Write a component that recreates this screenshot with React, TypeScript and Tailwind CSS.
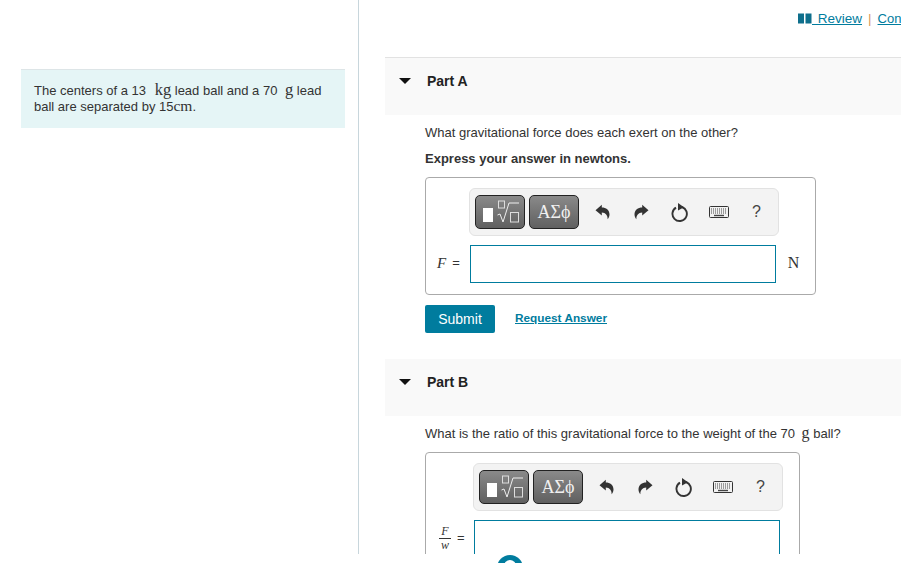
import React from "react";

const serif = "font-['Liberation_Serif',serif]";

function UndoIcon({ flip }: { flip?: boolean }) {
  return (
    <svg width="15" height="16" viewBox="0 0 15 16" className={flip ? "-scale-x-100" : ""}>
      <path d="M0.5 6.2 L6.8 0.8 V3.6 C11 3.6 14.5 6 14.5 10.6 C14.5 12.4 13.8 14 12.6 15.2 C12.8 11.6 10.6 8.6 6.8 8.6 V11.6 Z" fill="#333" />
    </svg>
  );
}

function RotateIcon() {
  return (
    <svg width="18" height="20" viewBox="0 0 18 20">
      <path d="M5 5.6 A7.2 7.2 0 1 0 11 5" fill="none" stroke="#333" strokeWidth="1.9" />
      <path d="M7 1 L13 5.2 L7 8.4 Z" fill="#333" />
    </svg>
  );
}

function KeyboardIcon() {
  return (
    <svg width="20" height="12" viewBox="0 0 20 12">
      <rect x="0.5" y="0.5" width="19" height="11" rx="1" fill="#f2f2f2" stroke="#333" />
      <path d="M2 3 H18 M2 5 H18 M2 7 H18" stroke="#444" strokeWidth="1" strokeDasharray="1 1" />
      <path d="M5 9.5 H15" stroke="#444" strokeWidth="1.4" />
    </svg>
  );
}

function TemplateIcon() {
  return (
    <svg width="38" height="28" viewBox="0 0 38 28">
      <rect x="2" y="10" width="10" height="14" fill="#fff" />
      <rect x="17.5" y="3" width="6" height="7" fill="none" stroke="#ddd" />
      <path d="M16.5 17 L19 16 L22 24 L28 5 H38" fill="none" stroke="#eee" strokeWidth="1" />
      <rect x="29.5" y="14.5" width="8" height="9.5" fill="none" stroke="#ddd" />
    </svg>
  );
}

function Toolbar({ className }: { className: string }) {
  return (
    <div className={`flex h-[48px] w-[310px] items-center rounded-[6px] border border-[#e2e2e2] bg-[#f3f3f3] pl-[5px] ${className}`}>
      <div className="flex h-[34px] w-[50px] items-center justify-center rounded-[5px] border border-[#222] bg-gradient-to-b from-[#8a8a8a] to-[#606060]">
        <TemplateIcon />
      </div>
      <div className={`ml-[4px] flex h-[34px] w-[50px] items-center justify-center rounded-[5px] border border-[#222] bg-gradient-to-b from-[#8a8a8a] to-[#606060] text-[18px] text-[#f0f0f0] ${serif}`}>
        ΑΣϕ
      </div>
      <div className="ml-[16px] flex w-[15px] justify-center"><UndoIcon /></div>
      <div className="ml-[24px] flex w-[15px] justify-center"><UndoIcon flip /></div>
      <div className="ml-[22px] flex w-[18px] justify-center"><RotateIcon /></div>
      <div className="ml-[20px] flex w-[20px] justify-center"><KeyboardIcon /></div>
      <div className="ml-[23px] text-[16px] text-[#444]">?</div>
    </div>
  );
}

function PartHeader({ label, className }: { label: string; className: string }) {
  return (
    <div className={`flex items-start bg-[#f9f9f9] pl-[14px] pt-[14px] ${className}`}>
      <div className="mt-[6px] h-0 w-0 border-x-[6px] border-t-[6px] border-x-transparent border-t-[#111]" />
      <span className="ml-[16px] text-[14px] font-bold leading-[18px] text-[#222]">{label}</span>
    </div>
  );
}

export default function App() {
  return (
    <div className="relative h-[563px] w-[901px] overflow-hidden bg-white font-['Liberation_Sans',Arial,sans-serif] text-[13px] text-[#333]">
      <div className="flex h-[554px] overflow-hidden">
        {/* Left intro column */}
        <div className="w-[359px] shrink-0 border-r border-[#c8d6dc] pl-[21px] pt-[69px]">
          <div className="h-[59px] w-[324px] border-t border-[#dde5e7] bg-[#e5f5f6] px-[13px] pt-[12px]">
            <div className="h-[16px] leading-[16px]">
              The centers of a 13 <span className={`ml-[5px] text-[16.5px] leading-[16px] ${serif}`}>kg</span> lead ball and a 70 <span className={`ml-[4px] text-[16.5px] leading-[16px] ${serif}`}>g</span> lead
            </div>
            <div className="h-[16px] leading-[15px]">
              ball are separated by 15<span className={`text-[15.5px] leading-[15px] ${serif}`}>cm</span>.
            </div>
          </div>
        </div>

        {/* Parts column */}
        <div className="min-w-0 flex-1 overflow-hidden">
          <div className="flex h-[57px] items-start whitespace-nowrap pl-[439px] pt-[10px] text-[13.5px] leading-[17px]">
            <svg width="14" height="11" viewBox="0 0 14 11" className="mt-[3px] shrink-0">
              <path d="M0 0.5 H6 V10.5 H0 Z M7.5 0.5 H13.5 V10.5 H7.5 Z" fill="#0e6f8c" />
            </svg>
            <a className="text-[#007c9e] underline [word-spacing:2px]">&nbsp;Review</a>
            <span className="ml-[6px] mr-[6px] text-[#d9995b]">|</span>
            <a className="text-[13px] text-[#007c9e] underline">Con</a>
          </div>

          <div className="pl-[26px]">
            <PartHeader label="Part A" className="h-[58px] border-t border-[#e2e2e2]" />
            <div className="pl-[40px]">
              <p className="mt-[9px] leading-[17px]">What gravitational force does each exert on the other?</p>
              <p className="mt-[9px] font-bold leading-[17px]">Express your answer in newtons.</p>
              <div className="mt-[10px] h-[118px] w-[391px] rounded-[4px] border border-[#aaa] pt-[10px]">
                <Toolbar className="ml-[43px]" />
                <div className="mt-[9px] flex items-center">
                  <span className={`ml-[11px] -translate-y-px text-[15px] italic ${serif}`}>F</span>
                  <span className="ml-[6px] -translate-y-px text-[13px]">=</span>
                  <div className="ml-[10px] h-[38px] w-[306px] border border-[#007c9e]" />
                  <span className={`ml-[12px] -translate-y-px text-[16px] ${serif}`}>N</span>
                </div>
              </div>
              <div className="mt-[10px] flex items-center">
                <button className="h-[28px] w-[70px] rounded-[2px] bg-[#007c9e] text-[14px] text-white">Submit</button>
                <a className="ml-[20px] text-[11.8px] font-bold text-[#007c9e] underline">Request Answer</a>
              </div>
            </div>

            <PartHeader label="Part B" className="mt-[26px] h-[57px]" />
            <div className="pl-[40px]">
              <p className="mt-[9px] leading-[17px]">
                What is the ratio of this gravitational force to the weight of the 70 <span className={`ml-[3px] text-[16px] leading-[16px] ${serif}`}>g</span> ball?
              </p>
              <div className="mt-[10px] h-[140px] w-[375px] rounded-[4px] border border-[#aaa] pt-[10px]">
                <Toolbar className="ml-[47px]" />
                <div className="mt-[9px] flex items-start">
                  <div className={`ml-[13px] mt-[5px] flex w-[12px] flex-col items-center text-[12px] italic leading-[13px] ${serif}`}>
                    <span className="w-full border-b border-[#333] text-center">F</span>
                    <span>w</span>
                  </div>
                  <span className="ml-[6px] mt-[8px] text-[13px]">=</span>
                  <div className="ml-[9px] h-[38px] w-[306px] border border-[#007c9e]" />
                </div>
              </div>
            </div>
          </div>
        </div>
      </div>

      {/* Help bubble peeking in from the bottom edge */}
      <div className="absolute left-[497px] top-[555px] h-[26px] w-[26px] rounded-full bg-[#007c9e]">
        <div className="mx-auto mt-[5px] h-[8px] w-[12px] rounded-t-full bg-white" />
      </div>
    </div>
  );
}
